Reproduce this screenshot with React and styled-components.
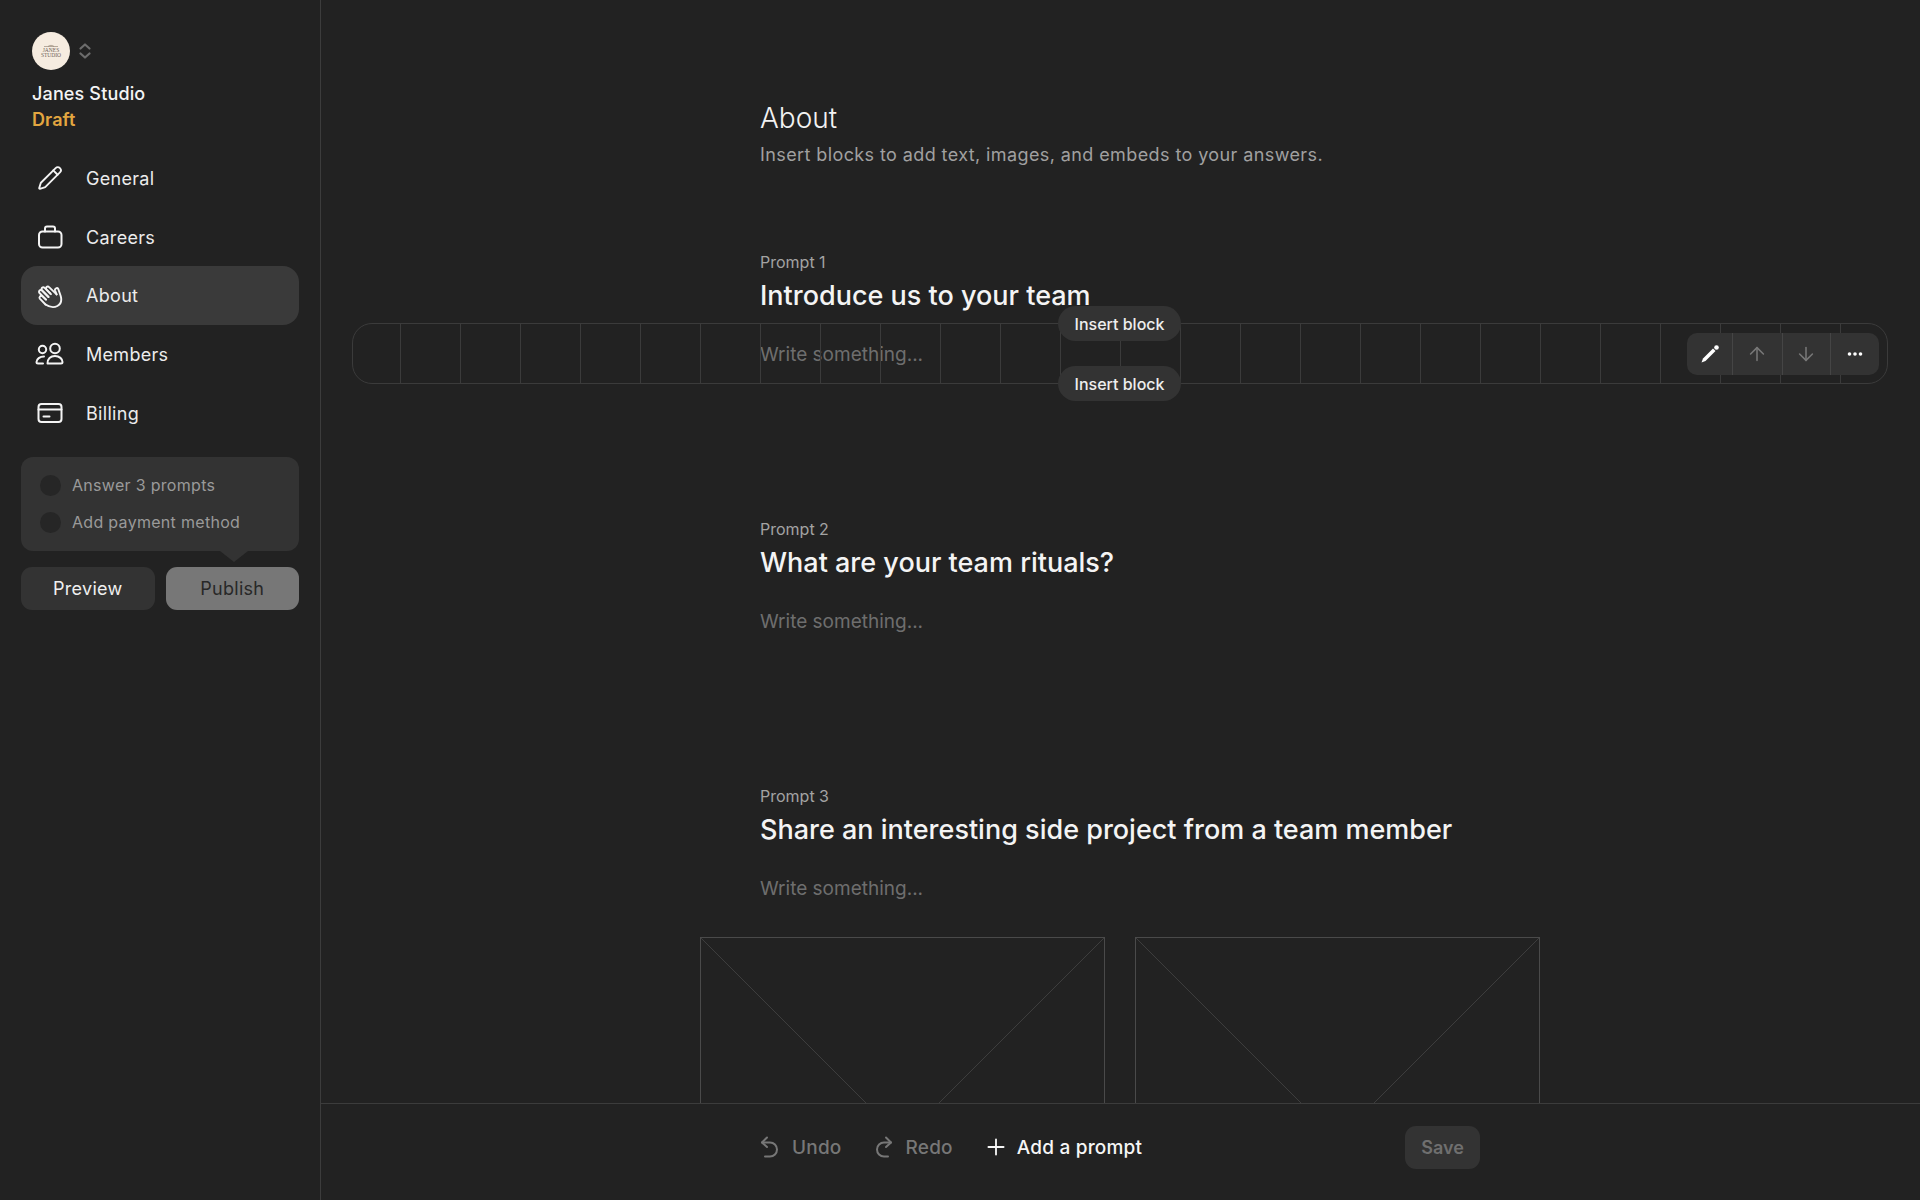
import React from 'react';
import styled, { createGlobalStyle } from 'styled-components';
import { ArrowUp, ArrowDown, Plus, Pencil } from 'lucide-react';

const GlobalStyle = createGlobalStyle`
  html, body { margin: 0; padding: 0; background: #222222; }
  * { box-sizing: border-box; }
  body { font-family: Inter, "Liberation Sans", sans-serif; color: #f2f2f2; }
`;

const Page = styled.div`
  display: flex;
  width: 1920px;
  height: 1200px;
  overflow: hidden;
  background: #222222;
`;

// left column
const Sidebar = styled.aside`
  flex: 0 0 321px;
  height: 100%;
  border-right: 1px solid #3c3c3c;
  padding: 32px 21px 0;
`;

const Brand = styled.div`
  padding-left: 11px;
`;

const AvatarRow = styled.div`
  display: flex;
  align-items: center;
  gap: 9px;
  height: 38px;
  color: #6c6c6c;
`;

const Avatar = styled.div`
  width: 38px;
  height: 38px;
  border-radius: 50%;
  background: #f6ece0;
  color: #6f6257;
  display: flex;
  flex-direction: column;
  align-items: center;
  justify-content: center;
  text-align: center;
  font-family: "Liberation Serif", serif;
  font-size: 5.5px;
  line-height: 5.5px;
`;

const StudioName = styled.div`
  margin-top: 11px;
  font-size: 18px;
  line-height: 26px;
  font-weight: 500;
  letter-spacing: 0.15px;
  color: #f4f4f4;
`;

const Status = styled.div`
  font-size: 18px;
  line-height: 26px;
  font-weight: 600;
  letter-spacing: 0.1px;
  color: #e3a640;
`;

const Nav = styled.nav`
  margin-top: 16px;
  display: flex;
  flex-direction: column;
`;

const NavItem = styled.a`
  display: flex;
  align-items: center;
  height: 58.7px;
  padding-left: 12px;
  gap: 19px;
  border-radius: 16px;
  font-size: 18px;
  letter-spacing: 0.3px;
  color: #ececec;
  background: ${p => (p.$active ? '#3a3a3a' : 'transparent')};
`;

const NavIcon = styled.span`
  width: 34px;
  height: 34px;
  display: flex;
  align-items: center;
  justify-content: center;
  color: #f4f4f4;
`;

const Checklist = styled.div`
  position: relative;
  margin-top: 15px;
  height: 94px;
  padding: 17px 19px;
  border-radius: 12px;
  background: #333333;
  display: flex;
  flex-direction: column;
  gap: 15px;
  &::after {
    content: '';
    position: absolute;
    left: 199px;
    bottom: -11px;
    border-left: 14px solid transparent;
    border-right: 14px solid transparent;
    border-top: 11px solid #333333;
  }
`;

const CheckRow = styled.div`
  display: flex;
  align-items: center;
  gap: 11px;
  height: 22px;
  font-size: 16px;
  letter-spacing: 0.3px;
  color: #9a9a9a;
`;

const CheckDot = styled.span`
  width: 21px;
  height: 21px;
  border-radius: 50%;
  background: #262626;
`;

const Actions = styled.div`
  margin-top: 16px;
  display: flex;
  gap: 11px;
`;

const ActionButton = styled.button`
  flex: 1;
  height: 43px;
  border: 0;
  border-radius: 11px;
  font: inherit;
  font-size: 18px;
  letter-spacing: 0.3px;
  font-weight: 400;
  background: ${p => (p.$primary ? '#777777' : '#333333')};
  color: ${p => (p.$primary ? '#282828' : '#efefef')};
`;

// right column
const Main = styled.main`
  flex: 1;
  min-width: 0;
  display: flex;
  flex-direction: column;
`;

const Scroll = styled.div`
  flex: 1;
  min-height: 0;
  overflow: hidden;
`;

const Column = styled.div`
  width: 720px;
  margin-left: 439px;
  padding-top: 100px;
`;

const PageTitle = styled.h1`
  margin: 0;
  font-size: 28px;
  line-height: 36px;
  font-weight: 300;
  color: #f2f2f2;
`;

const PageSub = styled.p`
  margin: 6px 0 0;
  font-size: 18px;
  line-height: 26px;
  letter-spacing: 0.4px;
  color: #a0a0a0;
`;

const PromptBlock = styled.section`
  position: relative;
  &:first-of-type {
    margin-top: 84px;
  }
  &:not(:last-of-type) {
    height: 267px;
  }
`;

const PromptLabel = styled.div`
  font-size: 16px;
  line-height: 20px;
  color: #a3a3a3;
`;

const PromptTitle = styled.h2`
  margin: 6px 0 0;
  font-size: 27px;
  line-height: 36px;
  font-weight: 500;
  color: #f4f4f4;
`;

const Placeholder = styled.div`
  margin-top: 28px;
  font-size: 19px;
  line-height: 26px;
  color: #6e6e6e;
`;

const HoverFrame = styled.div`
  position: absolute;
  left: -408px;
  top: 71px;
  width: 1536px;
  height: 61px;
  border: 1px solid #3b3b3b;
  border-radius: 20px;
  background-image: linear-gradient(to right, #3b3b3b 0, #3b3b3b 1px, transparent 1px);
  background-size: 60px 100%;
  background-position: 47px 0;
`;

const InsertPill = styled.button`
  position: absolute;
  left: 705px;
  top: ${p => p.$top}px;
  width: 123px;
  height: 35px;
  border: 0;
  border-radius: 18px;
  background: #333333;
  color: #eeeeee;
  font: inherit;
  font-size: 16px;
  font-weight: 500;
`;

const BlockTools = styled.div`
  position: absolute;
  right: 8px;
  top: 9px;
  display: flex;
  height: 42px;
  width: 192px;
  border-radius: 10px;
  overflow: hidden;
  background: #333333;
`;

const ToolButton = styled.span`
  flex: ${p => p.$w} 0 0;
  display: flex;
  align-items: center;
  justify-content: center;
  color: ${p => (p.$muted ? '#777777' : '#ffffff')};
  & + & {
    border-left: 1px solid #454545;
  }
`;

const ImageRow = styled.div`
  display: flex;
  gap: 30px;
  margin: 35px -60px 0;
`;

const ImageBox = styled.div`
  width: 405px;
  height: 405px;
  border: 1px solid #4a4a4a;
  flex: none;
  & svg {
    display: block;
    width: 100%;
    height: 100%;
  }
`;

const BottomBar = styled.footer`
  flex: 0 0 97px;
  position: relative;
  background: #222222;
  border-top: 1px solid #3c3c3c;
`;

const BarInner = styled.div`
  width: 720px;
  height: 100%;
  margin-left: 439px;
  padding-bottom: 10px;
  display: flex;
  align-items: center;
  font-size: 19px;
  font-weight: 500;
  letter-spacing: 0.2px;
`;

const BarAction = styled.span`
  display: flex;
  align-items: center;
  gap: ${p => p.$gap}px;
  margin-right: ${p => p.$after || 0}px;
  color: ${p => (p.$on ? '#f6f6f6' : '#777777')};
`;

const SaveButton = styled.button`
  margin-left: auto;
  width: 75px;
  height: 43px;
  border: 0;
  border-radius: 11px;
  background: #333333;
  color: #6f6f6f;
  font: inherit;
  font-size: 18px;
  font-weight: 600;
`;

const line = { fill: 'none', stroke: 'currentColor', strokeWidth: 2, strokeLinecap: 'round', strokeLinejoin: 'round' };

const Updown = () => (
  <svg width="12" height="16" viewBox="0 0 12 16" {...line} strokeWidth="2.2">
    <path d="M1.500 5.500 6 1.500l4.500 4M1.500 10.500 6 14.500l4.500-4" />
  </svg>
);
const Crest = () => (
  <svg width="16" height="4" viewBox="0 0 16 4" fill="none" stroke="#8a7a6a" strokeWidth="0.6">
    <path d="M1 2.500h14M5 2.500C6 1 10 1 11 2.500" />
  </svg>
);
const WaveHand = () => (
  <svg width="26" height="26" viewBox="0 0 26 26" {...line} strokeWidth="1.9">
    <path d="M8.500 21.500 2.800 15.600a1.800 1.800 0 0 1 2.500-2.500L9 16.600" />
    <path d="M9 16.600 2.500 10a1.800 1.800 0 0 1 2.600-2.500L11.500 14" />
    <path d="M11.500 14 5 7.300a1.800 1.800 0 0 1 2.600-2.500L14 11.200" />
    <path d="M13.200 10.500 9.500 6.600a1.800 1.800 0 0 1 2.600-2.500l7.500 7.300" />
    <path d="M19.600 11.400 18 7.300a1.800 1.800 0 0 1 3.300-1.300l2.400 7c1.300 4.600-.4 8.400-3.300 10-3.900 2.100-8 1.100-11.900-1.500" />
  </svg>
);
const Bag = () => (
  <svg width="26" height="24" viewBox="0 0 26 24" {...line}>
    <rect x="2" y="6.500" width="22.500" height="16" rx="3.500" />
    <path d="M8 6.500V3.500A2 2 0 0 1 10 1.500h6a2 2 0 0 1 2 2v3" />
  </svg>
);
const People = () => (
  <svg width="32" height="24" viewBox="0 0 32 24" {...line}>
    <circle cx="21" cy="6.500" r="4.800" />
    <path d="M13.500 21.500c0-4.500 3-7.500 7.500-7.500s7.500 3 7.500 6c0 1-.6 1.500-1.500 1.500z" />
    <circle cx="8.500" cy="7.500" r="3.700" />
    <path d="M10 14.500c-4 0-7.500 2.500-7.500 5.500 0 1 .6 1.500 1.500 1.500h5" />
  </svg>
);
const Card = () => (
  <svg width="26" height="22" viewBox="0 0 26 22" {...line}>
    <rect x="1.500" y="2" width="23" height="18" rx="3" />
    <path d="M1.500 7.500h23M6.500 14.500h6" />
  </svg>
);
const Dots = () => (
  <svg width="16" height="4" viewBox="0 0 16 4" fill="currentColor">
    <circle cx="2.500" cy="2" r="1.800" />
    <circle cx="8" cy="2" r="1.800" />
    <circle cx="13.500" cy="2" r="1.800" />
  </svg>
);
const SolidPencil = () => (
  <svg width="20" height="20" viewBox="0 0 20 20" fill="currentColor">
    <path d="M13 4.500 15.500 7 5.500 17 1.500 18.500 3 14.500z" />
    <circle cx="16.500" cy="3.500" r="2.300" />
  </svg>
);
const UndoIcon = () => (
  <svg width="18" height="22" viewBox="0 0 18 22" {...line}>
    <path d="M7 1.500 2 6.500l5 4.500" />
    <path d="M2 6.500h8a6.500 6.500 0 0 1 0 14H5" />
  </svg>
);
const RedoIcon = () => (
  <svg width="18" height="22" viewBox="0 0 18 22" {...line}>
    <path d="M11 1.500l5 5-5 4.500" />
    <path d="M16 6.500h-7a7 7 0 0 0 0 14h4" />
  </svg>
);

const navItems = [
  { label: 'General', icon: <Pencil size={26} strokeWidth={1.7} /> },
  { label: 'Careers', icon: <Bag /> },
  { label: 'About', icon: <WaveHand />, active: true },
  { label: 'Members', icon: <People /> },
  { label: 'Billing', icon: <Card /> },
];

const prompts = [
  { label: 'Prompt 1', title: 'Introduce us to your team', hover: true },
  { label: 'Prompt 2', title: 'What are your team rituals?' },
  { label: 'Prompt 3', title: 'Share an interesting side project from a team member' },
];

function App() {
  return (
    <Page>
      <GlobalStyle />
      <Sidebar>
        <Brand>
          <AvatarRow>
            <Avatar><Crest />JANES<br />STUDIO</Avatar>
            <Updown />
          </AvatarRow>
          <StudioName>Janes Studio</StudioName>
          <Status>Draft</Status>
        </Brand>
        <Nav>
          {navItems.map(item => (
            <NavItem key={item.label} $active={item.active}>
              <NavIcon>{item.icon}</NavIcon>
              {item.label}
            </NavItem>
          ))}
        </Nav>
        <Checklist>
          <CheckRow><CheckDot />Answer 3 prompts</CheckRow>
          <CheckRow><CheckDot />Add payment method</CheckRow>
        </Checklist>
        <Actions>
          <ActionButton>Preview</ActionButton>
          <ActionButton $primary>Publish</ActionButton>
        </Actions>
      </Sidebar>
      <Main>
        <Scroll>
          <Column>
            <PageTitle>About</PageTitle>
            <PageSub>Insert blocks to add text, images, and embeds to your answers.</PageSub>
            {prompts.map(p => (
              <PromptBlock key={p.label}>
                <PromptLabel>{p.label}</PromptLabel>
                <PromptTitle>{p.title}</PromptTitle>
                <Placeholder>Write something...</Placeholder>
                {p.hover && (
                  <HoverFrame>
                    <InsertPill $top={-18}>Insert block</InsertPill>
                    <InsertPill $top={42}>Insert block</InsertPill>
                    <BlockTools>
                      <ToolButton $w={46}><SolidPencil /></ToolButton>
                      <ToolButton $w={49} $muted><ArrowUp size={22} strokeWidth={1.7} /></ToolButton>
                      <ToolButton $w={48} $muted><ArrowDown size={22} strokeWidth={1.7} /></ToolButton>
                      <ToolButton $w={49}><Dots /></ToolButton>
                    </BlockTools>
                  </HoverFrame>
                )}
              </PromptBlock>
            ))}
            <ImageRow>
              {[0, 1].map(i => (
                <ImageBox key={i}>
                  <svg viewBox="0 0 405 405">
                    <path d="M0 0 405 405M405 0 0 405" stroke="#3d3d3d" strokeWidth="1" />
                  </svg>
                </ImageBox>
              ))}
            </ImageRow>
          </Column>
        </Scroll>
        <BottomBar>
          <BarInner>
            <BarAction $gap={14} $after={33}><UndoIcon />Undo</BarAction>
            <BarAction $gap={13} $after={30}><RedoIcon />Redo</BarAction>
            <BarAction $on $gap={8}><Plus size={26} strokeWidth={1.7} />Add a prompt</BarAction>
            <SaveButton>Save</SaveButton>
          </BarInner>
        </BottomBar>
      </Main>
    </Page>
  );
}

export default App;
